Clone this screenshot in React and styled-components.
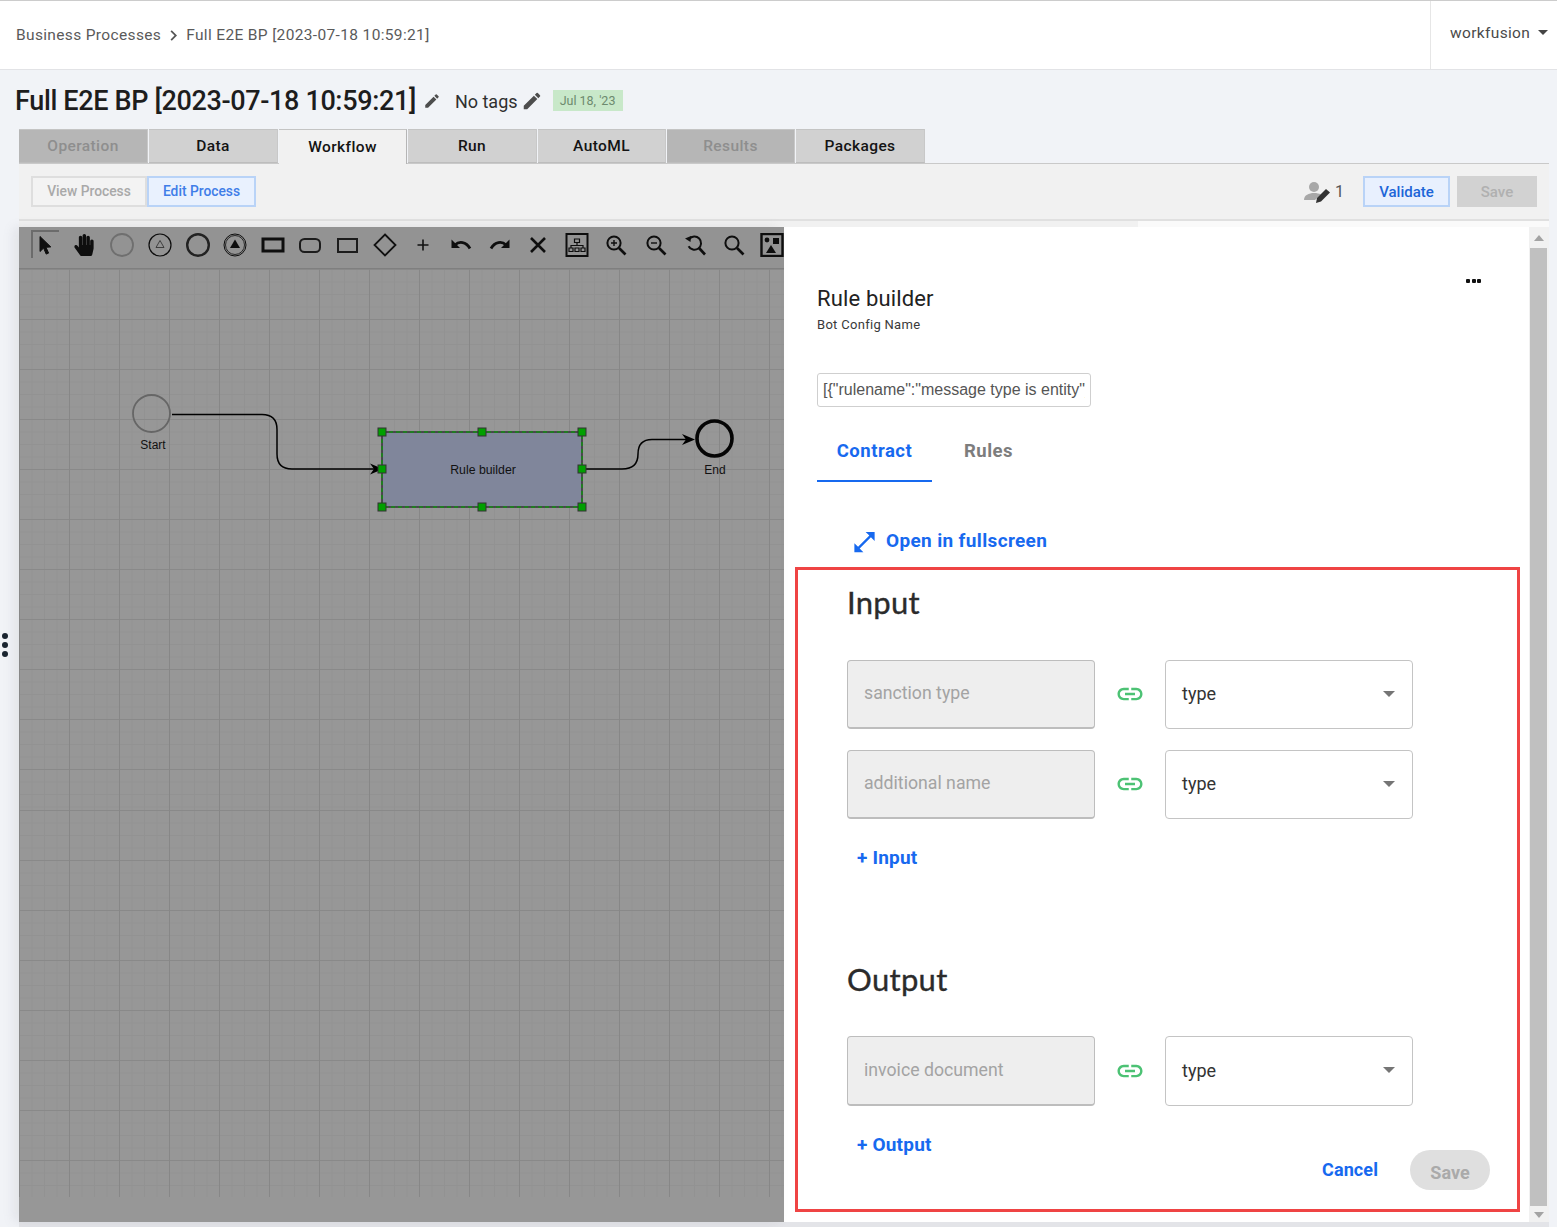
import React from "react";
import styled, { createGlobalStyle } from "styled-components";
import { FaHandPaper } from "react-icons/fa";
import { MdEdit, MdLink, MdOpenInFull, MdChevronRight } from "react-icons/md";

const GlobalStyle = createGlobalStyle`
  html, body {
    margin: 0;
    padding: 0;
    height: 1227px;
    overflow: hidden;
    background: #f1f3f7;
    font-family: Roboto, "Liberation Sans", sans-serif;
  }
  * { box-sizing: border-box; }
`;

const Page = styled.div`
  position: relative;
  width: 1557px;
  height: 1227px;
  display: flex;
  flex-direction: column;
`;

const TopBar = styled.header`
  height: 70px;
  background: #fff;
  border-top: 1px solid #ccc;
  border-bottom: 1px solid #e2e3e6;
  display: flex;
  align-items: stretch;
  justify-content: space-between;
`;

const Breadcrumb = styled.div`
  display: flex;
  align-items: center;
  padding-left: 16px;
  font-size: 15.5px;
  letter-spacing: 0.35px;
  color: #5a5a5a;
  svg { font-size: 21px; margin: 0 2px 0 2px; color: #555; }
`;

const UserMenu = styled.div`
  width: 127px;
  border-left: 1px solid #e6e6e6;
  display: flex;
  align-items: center;
  padding: 0 0 5px 19px;
  font-size: 15.5px;
  letter-spacing: 0.35px;
  color: #4a4a4a;
`;

const Caret = styled.span`
  width: 0;
  height: 0;
  margin-left: 8px;
  border-left: 5px solid transparent;
  border-right: 5px solid transparent;
  border-top: 5px solid #444;
`;

const TitleRow = styled.div`
  height: 59px;
  display: flex;
  align-items: center;
  padding: 2px 0 0 15px;
`;

const Title = styled.h1`
  margin: 0;
  font-size: 27px;
  font-weight: 500;
  letter-spacing: -0.35px;
  color: #1d1d1d;
`;

const PencilButton = styled.span`
  display: inline-flex;
  margin-left: ${(p) => p.$gap}px;
  color: #4d4d4d;
  font-size: ${(p) => p.$size}px;
`;

const TagsLabel = styled.span`
  margin: 1px 0 0 14px;
  font-size: 18px;
  color: #2f2f2f;
`;

const DateBadge = styled.span`
  margin-left: 10px;
  width: 70px;
  height: 21px;
  line-height: 21px;
  text-align: center;
  background: #c8e8c9;
  color: #6d8a6e;
  font-size: 12.5px;
`;

const TabBar = styled.nav`
  margin-left: 19px;
  height: 34px;
  display: flex;
`;

const Tab = styled.div`
  width: ${(p) => p.$width}px;
  margin-right: 1px;
  padding-bottom: ${(p) => (p.$active ? "1px" : "0")};
  display: flex;
  align-items: center;
  justify-content: center;
  font-size: 15.5px;
  font-weight: 500;
  letter-spacing: 0.4px;
  background: ${(p) => (p.$active ? "#f1f1f1" : p.$disabled ? "#b6b6b6" : "#d1d1d1")};
  color: ${(p) => (p.$disabled ? "#8e8e8e" : "#141414")};
  border-top: 1px solid #c4c4c4;
  border-right: 1px solid ${(p) => (p.$active ? "#b5b5b5" : "#c8c8c8")};
  border-bottom: ${(p) => (p.$active ? "0" : "1px solid #bdbdbd")};
  position: relative;
  height: ${(p) => (p.$active ? "35px" : "34px")};
  z-index: ${(p) => (p.$active ? 1 : 0)};
`;

const Panel = styled.section`
  margin-left: 19px;
  width: 1530px;
  height: 1059px;
  background: #f1f1f1;
  border-top: 1px solid #c9c9c9;
  display: flex;
  flex-direction: column;
`;

const ActionBar = styled.div`
  height: 57px;
  flex: none;
  border-bottom: 2px solid #e0e0e0;
  display: flex;
  align-items: flex-start;
  justify-content: space-between;
  padding: 12px 12px 0 12px;
`;

const ModeSwitch = styled.div`
  display: flex;
`;

const ModeButton = styled.button`
  height: 31px;
  width: ${(p) => p.$width}px;
  padding: 0 0 1px;
  font-family: inherit;
  font-size: 13.8px;
  font-weight: 500;
  color: ${(p) => (p.$active ? "#3f7de8" : "#a9a9a9")};
  background: ${(p) => (p.$active ? "#e9f1fe" : "#f3f3f3")};
  border: 2px solid ${(p) => (p.$active ? "#b9d3f7" : "#dedede")};
`;

const ActionGroup = styled.div`
  display: flex;
  align-items: center;
  gap: 7px;
`;

const Collaborators = styled.div`
  display: flex;
  align-items: center;
  gap: 3px;
  margin-right: 12px;
  font-size: 16px;
  color: #555;
`;

const ValidateButton = styled.button`
  width: 87px;
  height: 31px;
  padding: 0;
  font-family: inherit;
  font-size: 15px;
  font-weight: 500;
  color: #1d66d8;
  background: #e8f0fe;
  border: 2px solid #b9d3f7;
`;

const BarSaveButton = styled.button`
  width: 80px;
  height: 31px;
  padding: 0;
  border: 0;
  font-family: inherit;
  font-size: 15px;
  font-weight: 500;
  color: #b0b0b0;
  background: #d2d2d2;
`;

const Strip = styled.div`
  height: 6px;
  flex: none;
  display: flex;
`;

const StripPart = styled.div`
  width: ${(p) => p.$width}px;
  background: ${(p) => p.$color};
`;

const Workspace = styled.div`
  height: 995px;
  flex: none;
  display: flex;
`;

const CanvasPane = styled.div`
  position: relative;
  width: 765px;
  flex: none;
  background: #979797;
  overflow: hidden;
  display: flex;
  flex-direction: column;
  box-shadow: -6px 0 10px rgba(120, 120, 130, 0.12);
`;

const ToolRow = styled.div`
  height: 42px;
  flex: none;
  padding: 0 0 6px 5px;
  display: flex;
  align-items: center;
  background: #939393;
  border-bottom: 1px solid #7f7f7f;
`;

const ToolSlot = styled.div`
  position: relative;
  width: ${(p) => p.$width}px;
  flex: none;
  display: flex;
  align-items: center;
  justify-content: center;
  color: #0e0e0e;
`;

const ToolFrame = styled.span`
  position: absolute;
  left: 7px;
  top: -3px;
  width: 28px;
  height: 28px;
  border-top: 2px solid #6b6b6b;
  border-left: 2px solid #6b6b6b;
`;

const GridBand = styled.div`
  height: ${(p) => p.$height}px;
  flex: none;
  background-color: #979797;
  background-image:
    linear-gradient(to right, #878787 1px, transparent 1px),
    linear-gradient(to bottom, #898989 1px, transparent 1px),
    linear-gradient(to right, #929292 1px, transparent 1px),
    linear-gradient(to bottom, #929292 1px, transparent 1px);
  background-size: 50px 50px, 50px 50px, 12.5px 12.5px, 12.5px 12.5px;
`;

const Diagram = styled.svg`
  position: absolute;
  left: 0;
  top: 0;
  width: 765px;
  height: 995px;
`;

const Drawer = styled.aside`
  width: 745px;
  flex: none;
  background: #fff;
  padding: 0 9px 10px 11px;
  display: flex;
  flex-direction: column;
`;

const DrawerTop = styled.div`
  padding: 49px 39px 0 22px;
`;

const MoreMenu = styled.div`
  display: flex;
  justify-content: flex-end;
  gap: 1.5px;
  height: 10px;
  padding-top: 3px;
`;

const MoreDot = styled.span`
  width: 4px;
  height: 4px;
  border-radius: 1px;
  background: #111;
`;

const DrawerTitle = styled.h2`
  margin: 0;
  font-size: 22px;
  line-height: 26px;
  font-weight: 400;
  letter-spacing: 0.15px;
  color: #222;
`;

const DrawerSub = styled.div`
  margin-top: 5px;
  font-size: 13px;
  line-height: 16px;
  letter-spacing: 0.3px;
  color: #3a3a3a;
`;

const JsonField = styled.input`
  display: block;
  margin-top: 40px;
  width: 274px;
  height: 34px;
  padding: 0 5px;
  border: 1px solid #cfcfcf;
  border-radius: 3px;
  outline: none;
  font-family: "Liberation Sans", Arial, sans-serif;
  font-size: 16px;
  color: #555;
`;

const DrawerTabs = styled.div`
  margin-top: 26px;
  height: 49px;
  display: flex;
`;

const DrawerTab = styled.div`
  width: ${(p) => p.$width}px;
  height: 49px;
  padding-top: 7px;
  text-align: center;
  font-size: 18.5px;
  line-height: 22px;
  font-weight: 700;
  letter-spacing: 0.5px;
  color: ${(p) => (p.$active ? "#1769ef" : "#7d7d7d")};
  border-bottom: ${(p) => (p.$active ? "2px solid #1769ef" : "0")};
`;

const FullscreenLink = styled.div`
  margin: 46px 0 0 55.5px;
  height: 24px;
  display: flex;
  align-items: center;
  gap: 8.5px;
  font-size: 19px;
  font-weight: 700;
  letter-spacing: 0.35px;
  color: #1769ef;
  svg { font-size: 27px; transform: translateY(1.5px); }
`;

const Contract = styled.div`
  margin-top: 15px;
  height: 645px;
  flex: none;
  border: 3px solid #ef4444;
  padding: 14px 0 0 49px;
  display: flex;
  flex-direction: column;
`;

const SectionHeading = styled.h3`
  margin: 0;
  font-family: Lato, sans-serif;
  font-size: 31px;
  line-height: 36px;
  font-weight: 400;
  letter-spacing: 0.3px;
  -webkit-text-stroke: 0.35px #2b2b2b;
  color: #2b2b2b;
  margin-top: ${(p) => p.$top}px;
`;

const MappingRow = styled.div`
  display: flex;
  align-items: stretch;
  height: ${(p) => p.$height}px;
  margin-top: ${(p) => p.$top}px;
`;

const NameField = styled.div`
  width: 248px;
  padding: 0 0 2px 16px;
  display: flex;
  align-items: center;
  background: #eee;
  border: 1px solid #bdbdbd;
  border-bottom-width: 2px;
  border-radius: 4px;
  font-size: 17.7px;
  color: #a3a3a3;
`;

const LinkSlot = styled.div`
  width: 70px;
  display: flex;
  align-items: center;
  justify-content: center;
  padding-bottom: 1px;
  color: #4cc274;
  svg { font-size: 30px; }
`;

const TypeSelect = styled.div`
  width: 248px;
  padding: 0 16px 2px 16px;
  display: flex;
  align-items: center;
  justify-content: space-between;
  background: #fff;
  border: 1px solid #c4c4c4;
  border-radius: 4px;
  font-size: 18px;
  color: #333;
`;

const SelectCaret = styled.span`
  width: 0;
  height: 0;
  margin-right: 1px;
  border-left: 6.5px solid transparent;
  border-right: 6.5px solid transparent;
  border-top: 6.5px solid #757575;
`;

const AddLink = styled.div`
  margin-left: 10px;
  font-size: 19px;
  line-height: 24px;
  font-weight: 700;
  letter-spacing: 0.2px;
  color: #1769ef;
`;

const AddInput = styled(AddLink)`
  margin-top: 27px;
`;

const FooterRow = styled.div`
  margin-top: 27px;
  padding-right: 27px;
  display: flex;
  justify-content: space-between;
  align-items: flex-start;
`;

const FooterActions = styled.div`
  margin-top: 17px;
  display: flex;
  align-items: flex-start;
  gap: 32px;
`;

const CancelLink = styled.div`
  margin-top: 9px;
  font-size: 18px;
  line-height: 22px;
  font-weight: 700;
  letter-spacing: 0.1px;
  color: #1769ef;
`;

const SaveButton = styled.button`
  width: 80px;
  height: 40px;
  padding: 4px 0 0;
  border: 0;
  border-radius: 20px;
  font-family: inherit;
  font-size: 18px;
  font-weight: 700;
  color: #aaa;
  background: #dfdfdf;
`;

const Scrollbar = styled.div`
  width: 20px;
  flex: none;
  background: #f1f1f1;
  padding: 8px 2px 0 1px;
  display: flex;
  flex-direction: column;
  align-items: center;
`;

const ScrollArrow = styled.span`
  width: 0;
  height: 0;
  border-left: 5px solid transparent;
  border-right: 5px solid transparent;
  ${(p) => (p.$up ? "border-bottom: 6px solid #a3a3a3;" : "border-top: 6px solid #a3a3a3;")}
`;

const ScrollThumb = styled.div`
  width: 100%;
  height: 958px;
  margin: 7px 0 6px;
  background: #c0c0c0;
`;

const BottomShade = styled.div`
  height: 5px;
  background: #e3e4e8;
  margin-left: 19px;
  width: 1530px;
`;

const SideHandle = styled.div`
  position: absolute;
  left: 2px;
  top: 633px;
  display: flex;
  flex-direction: column;
  gap: 3px;
`;

const HandleDot = styled.span`
  width: 6px;
  height: 6px;
  border-radius: 50%;
  background: #1a2430;
`;

const Ic = ({ children, w = 24, h = 24 }) => (
  <svg width={w} height={h} viewBox={`0 0 ${w} ${h}`} fill="none" stroke="#0e0e0e">
    {children}
  </svg>
);

// slot widths follow the uneven spacing of the editor's toolbar
const tools = [
  { w: 40, icon: <Ic><path d="M8 3.5l0 15 3.6-3.4 2.6 6 2.4-1-2.6-5.8 4.8-.4z" fill="#0e0e0e" /></Ic> },
  { w: 39, icon: <FaHandPaper size={22} /> },
  { w: 38, icon: <Ic><circle cx="12" cy="12" r="11" stroke="#6f6f6f" strokeWidth="1.8" /></Ic> },
  { w: 38, icon: (
    <Ic>
      <circle cx="12" cy="12" r="11" strokeWidth="1.2" />
      <path d="M12 7.5l4 7h-8z" strokeWidth="0.8" stroke="#2a2a2a" />
    </Ic>
  ) },
  { w: 37.5, icon: <Ic><circle cx="12" cy="12" r="10.8" strokeWidth="2.4" stroke="#222" /></Ic> },
  { w: 37, icon: (
    <Ic>
      <circle cx="12" cy="12" r="11" strokeWidth="1" />
      <circle cx="12" cy="12" r="9.5" strokeWidth="0.8" />
      <path d="M12 6.5l5 8.5h-10z" fill="#0e0e0e" stroke="none" />
    </Ic>
  ) },
  { w: 38, icon: <Ic><rect x="2" y="6" width="20" height="12" strokeWidth="3" /></Ic> },
  { w: 37.5, icon: <Ic><rect x="2" y="6" width="20" height="13" rx="4.5" strokeWidth="2" stroke="#1c1c1c" /></Ic> },
  { w: 37, icon: <Ic><rect x="2" y="6" width="19" height="13" strokeWidth="2" stroke="#1c1c1c" /></Ic> },
  { w: 38, icon: <Ic><path d="M12 1.5L22.5 12 12 22.5 1.5 12z" strokeWidth="1.8" stroke="#111" /></Ic> },
  { w: 38, icon: <Ic><path d="M12 6.5v11M6.5 12h11" strokeWidth="1.6" stroke="#111" /></Ic> },
  { w: 38.5, icon: (
    <Ic>
      <path d="M2.500 6.500v8.500H11z" fill="#0e0e0e" stroke="none" />
      <path d="M6 12c4-4 11-3.500 15 3.500" strokeWidth="2.800" />
    </Ic>
  ) },
  { w: 38.5, icon: (
    <Ic>
      <path d="M21.500 6.500v8.500H13z" fill="#0e0e0e" stroke="none" />
      <path d="M18 12c-4-4-11-3.500-15 3.500" strokeWidth="2.800" />
    </Ic>
  ) },
  { w: 38.5, icon: <Ic><path d="M5 5l14 14M19 5L5 19" strokeWidth="2.6" /></Ic> },
  { w: 39, icon: (
    <Ic>
      <rect x="1.5" y="1" width="21" height="22" strokeWidth="2" />
      <path d="M9.5 6h5v3.5h-5zM12 9.5v3M6 15v-2.500h12V15M4 15h4v3.500H4zM10 15h4v3.500h-4zM16 15h4v3.500h-4z" strokeWidth="1.2" />
    </Ic>
  ) },
  { w: 39.5, icon: (
    <Ic>
      <circle cx="10" cy="10" r="6.6" strokeWidth="2" />
      <path d="M15 15l6.5 6.5" strokeWidth="2.6" />
      <path d="M7 10h6M10 7v6" strokeWidth="1.4" />
    </Ic>
  ) },
  { w: 39.5, icon: (
    <Ic>
      <circle cx="10" cy="10" r="6.6" strokeWidth="2" />
      <path d="M15 15l6.5 6.5" strokeWidth="2.6" />
      <path d="M7 10h6" strokeWidth="1.4" />
    </Ic>
  ) },
  { w: 39, icon: (
    <Ic>
      <path d="M6.2 6.2a6.6 6.6 0 1 1-.6 7" strokeWidth="2" />
      <path d="M2 5.5l6-2.500-.5 6z" fill="#0e0e0e" stroke="none" />
      <path d="M16 15l6 6.500" strokeWidth="2.6" />
    </Ic>
  ) },
  { w: 38.5, icon: (
    <Ic>
      <circle cx="10" cy="10" r="6.6" strokeWidth="2" />
      <path d="M15 15l6.5 6.5" strokeWidth="2.6" />
    </Ic>
  ) },
  { w: 38, icon: (
    <Ic>
      <rect x="1.5" y="1" width="21" height="22" strokeWidth="2.4" />
      <circle cx="7" cy="7" r="2.4" fill="#0e0e0e" stroke="none" />
      <rect x="13" y="5" width="6" height="6" fill="#0e0e0e" stroke="none" />
      <path d="M11 12l5 8H6z" fill="#0e0e0e" stroke="none" />
    </Ic>
  ) },
];

const handles = [
  [382, 432], [482, 432], [582, 432],
  [382, 469], [582, 469],
  [382, 507], [482, 507], [582, 507],
];

const WorkflowDiagram = () => (
  <Diagram viewBox="19 227 765 995" fontFamily="Liberation Sans, sans-serif" fontSize="12">
    <circle cx="151.5" cy="413.500" r="18.5" fill="none" stroke="#666" strokeWidth="1.8" />
    <text x="153" y="448.500" textAnchor="middle" fill="#111">Start</text>
    <path d="M172 414.500H262Q277 414.500 277 429.500V454Q277 469 292 469H374" fill="none" stroke="#000" strokeWidth="1.500" />
    <path d="M383 469L370 463.500L374 469L370 474.500z" fill="#000" />
    <rect x="382" y="432" width="200" height="75" fill="#80869b" />
    <rect x="382" y="432" width="200" height="75" fill="none" stroke="#333" strokeWidth="1.500" />
    <rect x="382" y="432" width="200" height="75" fill="none" stroke="#148c14" strokeWidth="1.500" strokeDasharray="4 3" />
    <text x="483" y="473.500" textAnchor="middle" fill="#111" fontSize="12.300">Rule builder</text>
    <path d="M582 469H622Q638 469 638 454Q638 439.500 652 439.500H686" fill="none" stroke="#000" strokeWidth="1.500" />
    <path d="M695 439.500L682 434L686 439.500L682 445z" fill="#000" />
    <circle cx="714.500" cy="438.500" r="17.500" fill="none" stroke="#050505" strokeWidth="3.600" />
    <text x="715" y="473.500" textAnchor="middle" fill="#111">End</text>
    {handles.map(([x, y]) => (
      <rect key={`${x}-${y}`} x={x - 4} y={y - 4} width="8" height="8" fill="#00a000" stroke="#333" strokeWidth="1" />
    ))}
  </Diagram>
);

const CollaboratorIcon = () => (
  <svg width="28" height="24" viewBox="0 0 28 24">
    <circle cx="10" cy="7" r="5" fill="#a8a8a8" />
    <path d="M0 20c0-5 5-7 10-7 3 0 5 .5 7 1.500L11 20z" fill="#a8a8a8" />
    <path d="M12 23l1-5 9-9 4 3.500-9 9z" fill="#333" />
  </svg>
);

const tabs = [
  { label: "Operation", width: 129, disabled: true },
  { label: "Data", width: 129 },
  { label: "Workflow", width: 128, active: true },
  { label: "Run", width: 129 },
  { label: "AutoML", width: 128 },
  { label: "Results", width: 128, disabled: true },
  { label: "Packages", width: 129 },
];

const Mapping = ({ name, height, top }) => (
  <MappingRow $height={height} $top={top}>
    <NameField>{name}</NameField>
    <LinkSlot><MdLink /></LinkSlot>
    <TypeSelect>
      type
      <SelectCaret />
    </TypeSelect>
  </MappingRow>
);

export default function App() {
  return (
    <Page>
      <GlobalStyle />
      <TopBar>
        <Breadcrumb>
          Business Processes
          <MdChevronRight />
          Full E2E BP [2023-07-18 10:59:21]
        </Breadcrumb>
        <UserMenu>
          workfusion
          <Caret />
        </UserMenu>
      </TopBar>

      <TitleRow>
        <Title>Full E2E BP [2023-07-18 10:59:21]</Title>
        <PencilButton $gap={7} $size={18}><MdEdit /></PencilButton>
        <TagsLabel>No tags</TagsLabel>
        <PencilButton $gap={3} $size={22}><MdEdit /></PencilButton>
        <DateBadge>Jul 18, '23</DateBadge>
      </TitleRow>

      <TabBar>
        {tabs.map((t) => (
          <Tab key={t.label} $width={t.width} $active={t.active} $disabled={t.disabled}>
            {t.label}
          </Tab>
        ))}
      </TabBar>

      <Panel>
        <ActionBar>
          <ModeSwitch>
            <ModeButton $width={116}>View Process</ModeButton>
            <ModeButton $width={109} $active>Edit Process</ModeButton>
          </ModeSwitch>
          <ActionGroup>
            <Collaborators>
              <CollaboratorIcon />
              1
            </Collaborators>
            <ValidateButton>Validate</ValidateButton>
            <BarSaveButton>Save</BarSaveButton>
          </ActionGroup>
        </ActionBar>
        <Strip>
          <StripPart $width={1119} $color="#f1f1f1" />
          <StripPart $width={411} $color="#fafafa" />
        </Strip>

        <Workspace>
          <CanvasPane>
            <ToolRow>
              {tools.map((t, i) => (
                <ToolSlot key={i} $width={t.w}>
                  {i === 0 && <ToolFrame />}
                  {t.icon}
                </ToolSlot>
              ))}
            </ToolRow>
            <GridBand $height={541} />
            <GridBand $height={387} />
            <WorkflowDiagram />
          </CanvasPane>

          <Drawer>
            <DrawerTop>
              <MoreMenu>
                <MoreDot /><MoreDot /><MoreDot />
              </MoreMenu>
              <DrawerTitle>Rule builder</DrawerTitle>
              <DrawerSub>Bot Config Name</DrawerSub>
              <JsonField readOnly value={'[{"rulename":"message type is entity"}]'} />
              <DrawerTabs>
                <DrawerTab $width={115} $active>Contract</DrawerTab>
                <DrawerTab $width={113}>Rules</DrawerTab>
              </DrawerTabs>
            </DrawerTop>
            <FullscreenLink>
              <MdOpenInFull />
              Open in fullscreen
            </FullscreenLink>
            <Contract>
              <SectionHeading $top={0}>Input</SectionHeading>
              <Mapping name="sanction type" height={69} top={40} />
              <Mapping name="additional name" height={69} top={21} />
              <AddInput>+ Input</AddInput>
              <SectionHeading $top={91}>Output</SectionHeading>
              <Mapping name="invoice document" height={70} top={39} />
              <FooterRow>
                <AddLink>+ Output</AddLink>
                <FooterActions>
                  <CancelLink>Cancel</CancelLink>
                  <SaveButton>Save</SaveButton>
                </FooterActions>
              </FooterRow>
            </Contract>
          </Drawer>

          <Scrollbar>
            <ScrollArrow $up />
            <ScrollThumb />
            <ScrollArrow />
          </Scrollbar>
        </Workspace>
      </Panel>
      <BottomShade />

      <SideHandle>
        <HandleDot /><HandleDot /><HandleDot />
      </SideHandle>
    </Page>
  );
}
